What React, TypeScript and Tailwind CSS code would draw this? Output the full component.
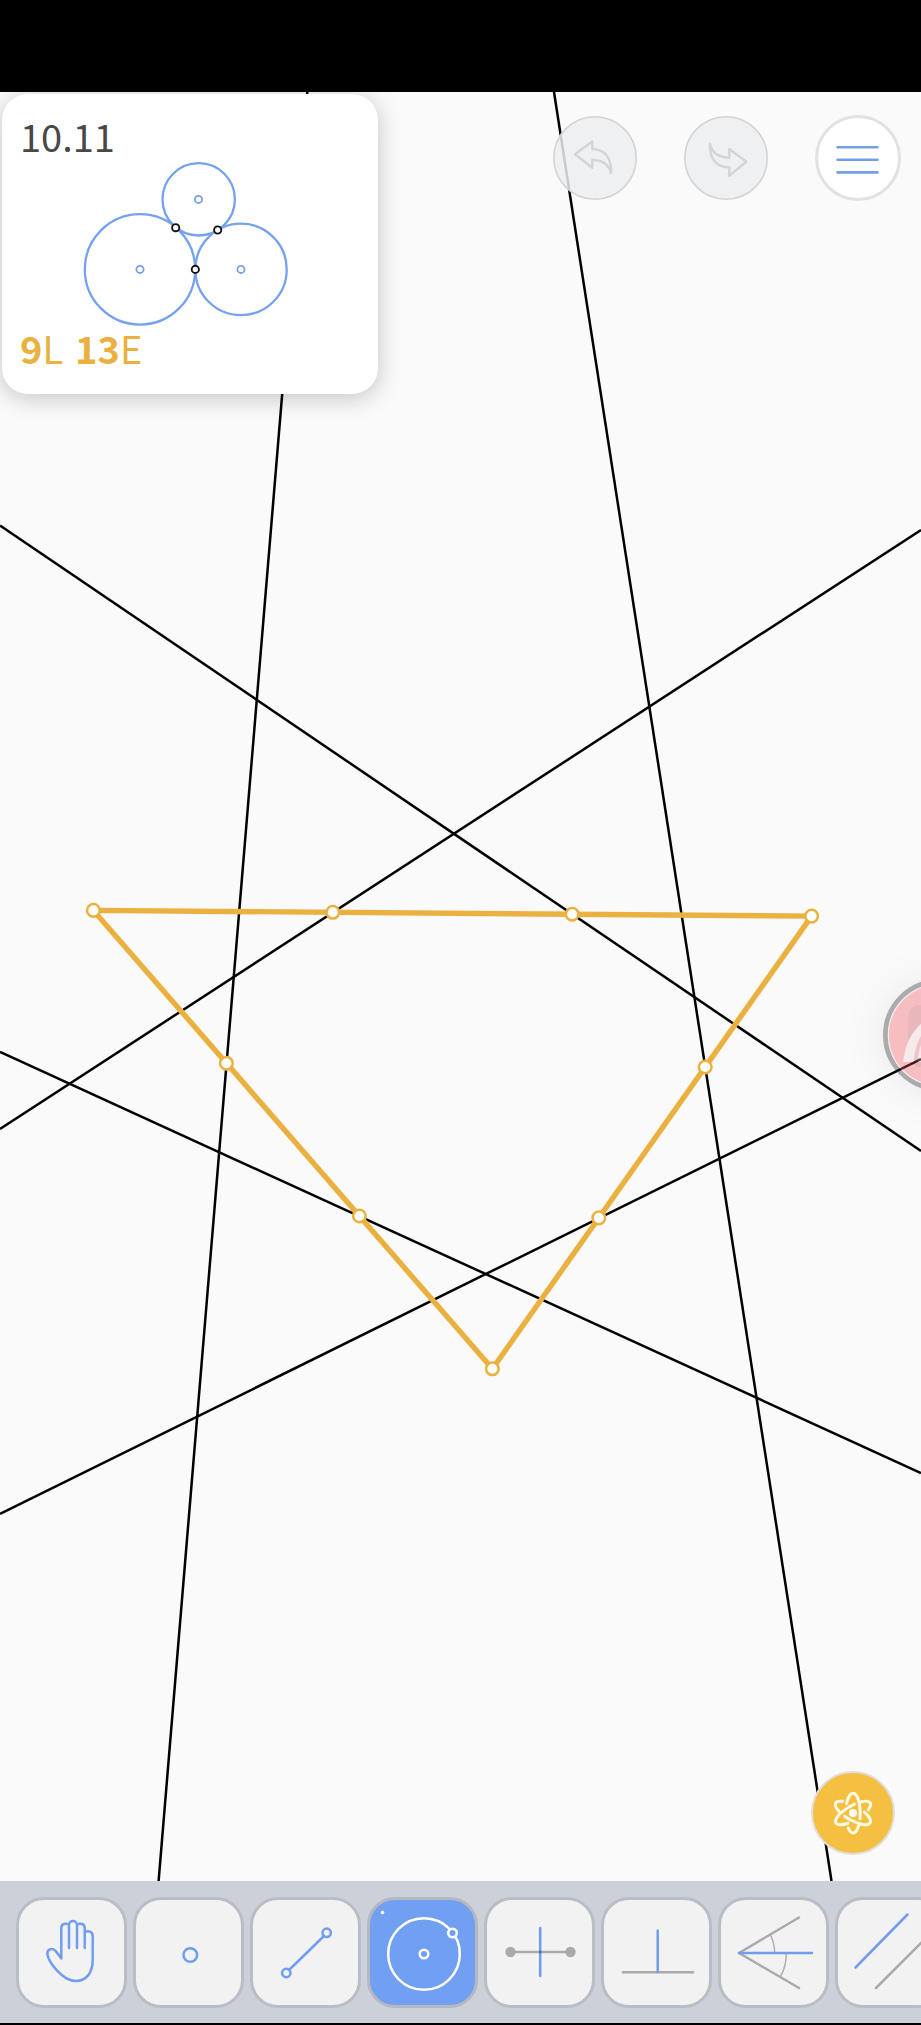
import type { ReactNode } from "react";

type Point = [number, number];

const lines: [Point, Point][] = [
  [[307.3, 0], [158.6, 1789]],
  [[554, 0], [831.5, 1789]],
  [[0, 1037], [921, 438]],
  [[0, 433.5], [921, 1059]],
  [[0, 960], [921, 1381]],
  [[0, 1422], [921, 967]],
];

const corners: Point[] = [[93.4, 818.4], [811.6, 824.1], [492.4, 1276.8]];

const points: Point[] = [
  ...corners,
  [332.8, 820.3],
  [572.2, 822.2],
  [226.4, 971.2],
  [359.4, 1124],
  [705.2, 975],
  [598.8, 1125.9],
];

function Construction() {
  return (
    <svg
      className="absolute inset-0 h-full w-full"
      viewBox="0 0 921 1789"
      preserveAspectRatio="xMidYMid slice"
      role="img"
      aria-label="Construction"
    >
      <g stroke="#000" strokeWidth="2.5">
        {lines.map(([a, b], i) => (
          <line key={i} x1={a[0]} y1={a[1]} x2={b[0]} y2={b[1]} />
        ))}
      </g>
      <polygon
        points={corners.map((p) => p.join(",")).join(" ")}
        fill="none"
        stroke="#ebb140"
        strokeWidth="5.4"
        strokeLinejoin="round"
      />
      <g fill="#fff" stroke="#ebb140" strokeWidth="2.5">
        {points.map(([x, y]) => (
          <circle key={`${x}-${y}`} cx={x} cy={y} r="6.3" />
        ))}
      </g>
    </svg>
  );
}

function LevelCard() {
  return (
    <section className="flex w-[376px] flex-col rounded-[26px] bg-white px-[18px] pt-[22px] pb-[26px] font-['Noto_Sans_CJK_SC',sans-serif] text-[38px] leading-[40px] shadow-[0_4px_24px_rgba(0,0,0,0.22)]">
      <h1 className="text-[#484848]">10.11</h1>
      <svg viewBox="20 156 340 172" className="h-[172px] w-full" fill="none" role="img" aria-label="Three tangent circles">
        <g stroke="#76a1ee" strokeWidth="2.3">
          <circle cx="140" cy="269.4" r="55.2" />
          <circle cx="241" cy="269.4" r="45.7" />
          <circle cx="198.7" cy="199.3" r="36.2" />
          <circle cx="140" cy="269.4" r="3.6" strokeWidth="1.8" />
          <circle cx="241" cy="269.4" r="3.6" strokeWidth="1.8" />
          <circle cx="198.5" cy="199.4" r="3.6" strokeWidth="1.8" />
        </g>
        <g fill="#fff" stroke="#111" strokeWidth="1.9">
          <circle cx="175.7" cy="227.7" r="3.6" />
          <circle cx="217.7" cy="230" r="3.6" />
          <circle cx="195.3" cy="269.4" r="3.6" />
        </g>
      </svg>
      <p className="flex gap-3 text-[#ebb140]">
        <span><b>9</b>L</span>
        <span><b>13</b>E</span>
      </p>
    </section>
  );
}

function HistoryButton({ label, d }: { label: string; d: string }) {
  return (
    <button
      type="button"
      aria-label={label}
      className="size-[84px] shrink-0 rounded-full bg-[#ecedef]/85"
    >
      <svg viewBox="0 0 84 84" className="size-full" fill="none" stroke="#d3d4d6" strokeWidth="2.4" strokeLinejoin="round">
        <circle cx="42" cy="42" r="41.2" strokeWidth="1.6" />
        <path d={d} />
      </svg>
    </button>
  );
}

function TopActions() {
  return (
    <div className="flex items-center gap-[47px] pt-[21px] pr-5">
      <HistoryButton
        label="Undo"
        d="M22 38.3 39.3 25.5V33.3C51.5 33 59 42 58 57 56 48.5 50 44.3 39.3 43.8V51.7Z"
      />
      <HistoryButton
        label="Redo"
        d="M26 28C25 42.5 33 51.8 45.3 51.3V59.7L62.3 45.7 45.3 33V41.7C35 41.5 28 36.5 26 28Z"
      />
      <button type="button" aria-label="Menu" className="size-[86px] shrink-0 rounded-full border-[3px] border-[#e2e2e2] bg-white">
        <svg viewBox="3 3 80 80" className="size-full" stroke="#739fe9" strokeWidth="2.6" strokeLinecap="round">
          <path d="M22.5 32.2H62.5M22.5 44.8H62.5M22.5 57.4H62.5" />
        </svg>
      </button>
    </div>
  );
}

function ExploreButton() {
  return (
    <button
      type="button"
      aria-label="Explore"
      className="absolute right-[26px] bottom-[26px] size-[84px] rounded-full border-2 border-[#e0dfdc] bg-[#f5bf42]"
    >
      <svg viewBox="-40 -40 80 80" className="size-full" fill="none" stroke="#fffbe4" strokeWidth="3" strokeLinecap="round">
        {[0, 120, 240].map((angle) => (
          <path
            key={angle}
            transform={`rotate(${angle})`}
            d="M-6.4-9.5A7.3 20 0 0 1 7 5.7M5.6 12.8A7.3 20 0 0 1-4.9 14.8"
          />
        ))}
        <circle r="4" fill="#fff" stroke="none" />
      </svg>
    </button>
  );
}

function RecorderBubble() {
  return (
    <button
      type="button"
      aria-label="Screen recorder"
      className="absolute top-[887px] -right-[74px] size-[112px] rounded-full opacity-35 shadow-[0_2px_36px_rgba(0,0,0,0.2)]"
    >
      <svg viewBox="0 0 116 116" className="size-full" fill="none">
        <circle cx="58" cy="58" r="55.5" fill="#ef525a" stroke="#1c1c1c" strokeWidth="5" />
        <circle cx="58" cy="58" r="52.4" stroke="#ddd" strokeWidth="1.2" />
        <rect x="26" y="27" width="64" height="64" rx="12" fill="#c93c48" />
        <path d="M21 86C23 62 36 43 56 37L96 62V86Z" fill="#fff" fillOpacity=".75" />
        <path d="M32 86C33 69 38 56 50 48V86Z" fill="#d8626c" />
        <path d="M36 86C37 70 41 60 52 51V86Z" fill="#f4c3c8" />
      </svg>
    </button>
  );
}

const blue = "#719df0";
const gray = "#aaa";

const tools: { name: string; icon: ReactNode }[] = [
  {
    name: "Move",
    icon: (
      <path
        stroke={blue}
        d="M42.3 58.5V28C42.3 23.8 46.5 22.8 50 24.5M50 48V25C50 19.8 58 19.8 58 25V48M58 24.5C61.5 22.8 65.7 23.8 65.7 28V48M65.7 32C69 30.3 73.7 31.5 73.7 36V60C73.7 73 67 81 57 81 43 81 29.5 61.5 28.5 54.5 27.5 49.5 33 47.3 36.5 50.8L42.3 58.5"
      />
    ),
  },
  { name: "Point", icon: <circle cx="54.3" cy="55" r="6.8" stroke={blue} /> },
  {
    name: "Line",
    icon: (
      <g stroke={blue}>
        <path d="M36 70 71 36" />
        <circle cx="33.3" cy="73" r="4.2" />
        <circle cx="73.7" cy="32.8" r="4.2" />
      </g>
    ),
  },
  {
    name: "Circle",
    icon: (
      <g stroke="#fff">
        <circle cx="54" cy="54" r="35.8" />
        <circle cx="54" cy="54" r="4.3" />
        <circle cx="82.5" cy="33" r="4.3" fill="#719ff2" />
        <circle cx="12.5" cy="12.5" r="1.8" fill="#fff" stroke="none" />
      </g>
    ),
  },
  {
    name: "Perpendicular bisector",
    icon: (
      <>
        <path d="M23.5 52H83.5" stroke={gray} />
        <circle cx="23.5" cy="52" r="5.2" fill={gray} stroke="none" />
        <circle cx="83.5" cy="52" r="5.2" fill={gray} stroke="none" />
        <path d="M53.2 28V76" stroke={blue} />
        <path d="M52 52H54.4" stroke="#456aa3" strokeLinecap="butt" />
      </>
    ),
  },
  {
    name: "Perpendicular",
    icon: (
      <>
        <path d="M19 72.3H89" stroke={gray} />
        <path d="M53.7 30.5V72" stroke={blue} />
      </>
    ),
  },
  {
    name: "Angle bisector",
    icon: (
      <>
        <path d="M78 17.5 18 53 78 88" stroke={gray} />
        <path d="M49.5 35Q53.5 43 53.7 53M65.3 53Q65.5 66 59.5 76.5" stroke={gray} strokeWidth="1.4" />
        <path d="M18 53H91" stroke={blue} />
      </>
    ),
  },
  {
    name: "Parallel",
    icon: (
      <>
        <path d="M38 88 91 35" stroke={gray} />
        <path d="M17.5 67.5 69.5 14.5" stroke={blue} />
      </>
    ),
  },
];

function Toolbar({ active }: { active: string }) {
  return (
    <nav aria-label="Tools" className="flex gap-1.5 overflow-hidden border-b-2 border-black bg-[#ccd0d9] pt-4 pb-[15px] pl-4">
      {tools.map(({ name, icon }) => (
        <button
          key={name}
          type="button"
          aria-label={name}
          aria-pressed={name === active}
          className={`size-[111px] shrink-0 rounded-[28px] border-[3px] ${
            name === active
              ? "border-[#b4b8c0] bg-[#719ff2]"
              : "border-[#b9bdc5] bg-[#f2f2f2]"
          }`}
        >
          <svg viewBox="0 0 105 105" className="size-full" fill="none" strokeWidth="2.5" strokeLinecap="round" strokeLinejoin="round">
            {icon}
          </svg>
        </button>
      ))}
    </nav>
  );
}

export default function App() {
  return (
    <div className="flex min-h-screen flex-col bg-[#fafafa]">
      <header className="h-[92px] shrink-0 bg-black" />
      <main className="relative flex-1 overflow-hidden">
        <Construction />
        <div className="relative flex items-start justify-between pt-0.5 pl-0.5">
          <LevelCard />
          <TopActions />
        </div>
        <RecorderBubble />
        <ExploreButton />
      </main>
      <Toolbar active="Circle" />
    </div>
  );
}
